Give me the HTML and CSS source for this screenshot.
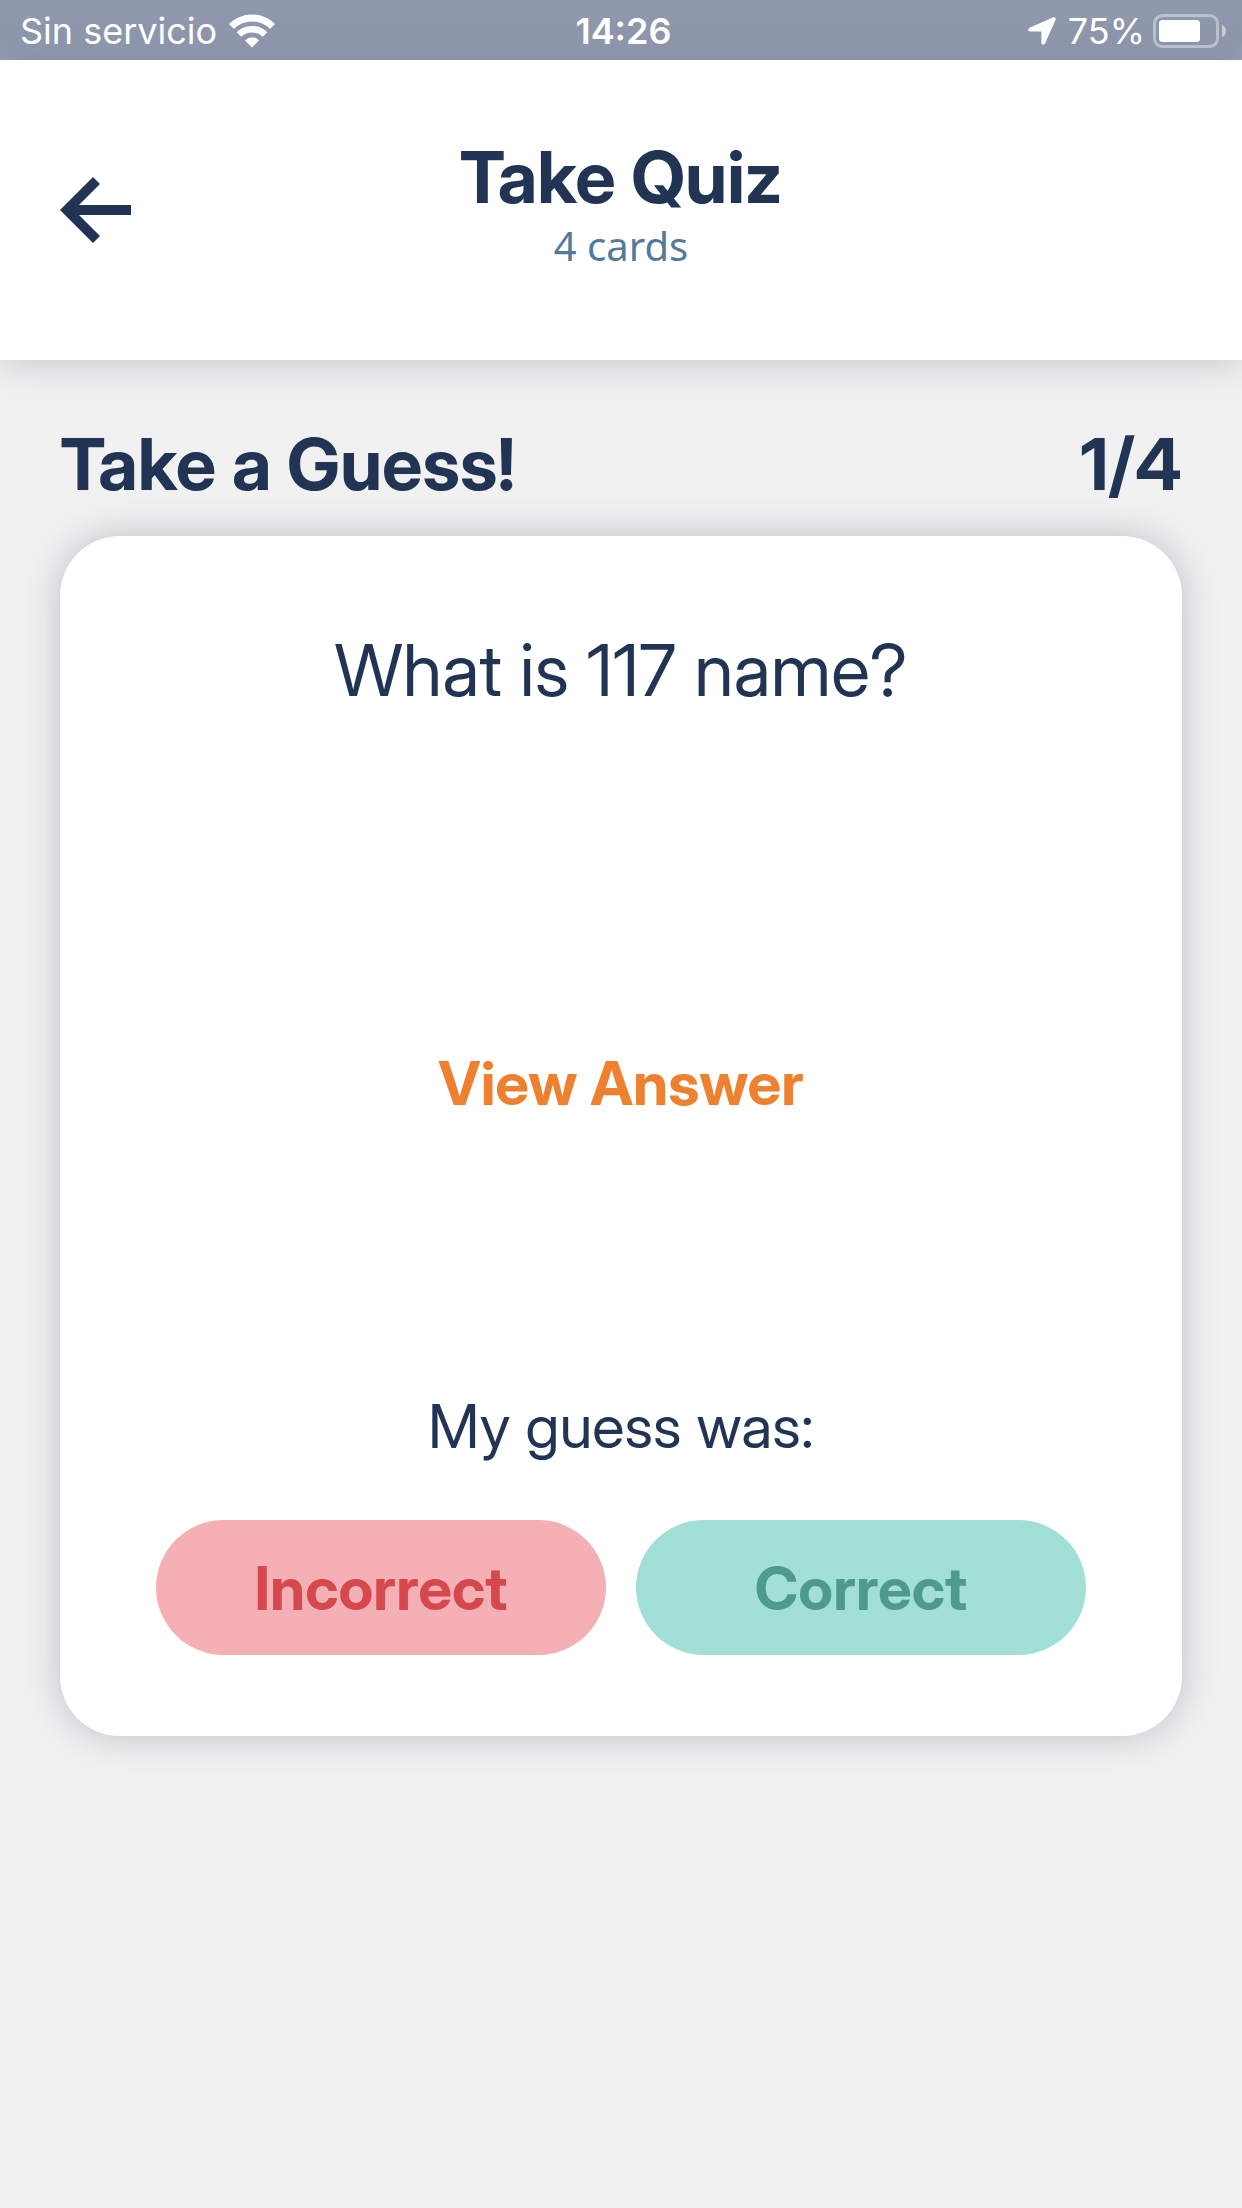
FILE: index.html
```html
<!DOCTYPE html>
<html lang="en">
<head>
<meta charset="utf-8">
<meta name="viewport" content="width=device-width, initial-scale=1">
<title>Take Quiz</title>
<link rel="stylesheet" href="styles.css">
</head>
<body>
<div class="status-bar">
  <div class="status-group">
    <span>Sin servicio</span>
    <svg class="wifi" width="46" height="34" viewBox="0 0 46 34" fill="none" aria-hidden="true">
      <path d="M2.5 12.5a29 29 0 0 1 41 0" stroke="#fff" stroke-width="7"/>
      <path d="M10 20.500a18.500 18.500 0 0 1 26 0" stroke="#fff" stroke-width="6.500"/>
      <path d="M23 33.500l-7-7q7-6.500 14 0z" fill="#fff"/>
    </svg>
  </div>
  <span class="status-time">14:26</span>
  <div class="status-group status-right">
    <svg class="location" width="28" height="28" viewBox="0 0 28 28" aria-hidden="true">
      <path d="M25.500.3L1.500 10.800C-.5 11.800-.2 14.400 2 14.400H13.400V25.500c0 2.500 2.800 2.800 3.700.8L27.700 2.500C28.200 1 27 -.3 25.500 .3z" fill="#fff"/>
    </svg>
    <span>75%</span>
    <svg class="battery" width="74" height="34" viewBox="0 0 74 34" fill="none" aria-hidden="true">
      <rect x="1.500" y="1.500" width="63" height="31" rx="8" stroke="#fff" stroke-opacity=".4" stroke-width="3"/>
      <rect x="6" y="6" width="41" height="22" rx="3.500" fill="#fff"/>
      <path d="M69 11c5.500 2 5.500 10 0 12z" fill="#fff" fill-opacity=".5"/>
    </svg>
  </div>
</div>

<header class="header">
  <button class="back" type="button" aria-label="Back">
    <svg width="72" height="66" viewBox="0 0 72 66" aria-hidden="true">
      <path d="M0 33L33 0l7 7-21 21h52v10H19l21 21-7 7z" fill="#223454"/>
    </svg>
  </button>
  <div class="heading">
    <h1 class="title">Take Quiz</h1>
    <p class="subtitle">4 cards</p>
  </div>
</header>

<main class="quiz">
  <div class="quiz-top">
    <h2 class="title">Take a Guess!</h2>
    <span class="title">1/4</span>
  </div>
  <section class="card">
    <p class="question">What is 117 name?</p>
    <button class="view-answer" type="button">View Answer</button>
    <div class="guess">
      <p class="guess-label">My guess was:</p>
      <div class="guess-actions">
        <button class="pill incorrect" type="button">Incorrect</button>
        <button class="pill correct" type="button">Correct</button>
      </div>
    </div>
  </section>
</main>
</body>
</html>
```
FILE: styles.css
```css
* {
  box-sizing: border-box;
}

body {
  margin: 0;
  min-height: 100vh;
  background: #f1f1f1;
  color: #223454;
  font-family: "Inter Display", Inter, "Liberation Sans", sans-serif;
}

h1, h2, p {
  margin: 0;
}

button {
  padding: 0;
  border: 0;
  background: none;
  font: inherit;
  cursor: pointer;
}

svg {
  display: block;
}

.status-bar {
  display: grid;
  grid-template-columns: 1fr auto 1fr;
  align-items: center;
  height: 60px;
  padding: 2px 15px 0 20px;
  background: linear-gradient(#9098ae, #9098ae 60%, #9aa2b3);
  color: #fff;
  font-family: Inter, "Liberation Sans", sans-serif;
  font-size: 36px;
}

.status-group {
  display: flex;
  align-items: center;
  gap: 12px;
}

.status-right {
  justify-content: flex-end;
  gap: 8px;
}

.location {
  margin-right: 4px;
}

.status-time {
  font-weight: 600;
}

.header {
  display: grid;
  grid-template-columns: 72px 1fr 72px;
  align-items: center;
  min-height: 300px;
  padding: 0 60px;
  background: #fff;
  box-shadow: 0 0 36px rgba(34, 52, 84, .26);
}

.heading {
  padding-bottom: 12px;
  text-align: center;
}

.title {
  font-size: 72px;
  font-weight: 700;
  line-height: 84px;
}

.subtitle {
  color: #527a9b;
  font-family: "Noto Sans", sans-serif;
  font-size: 40px;
  line-height: 54px;
}

.quiz {
  padding: 62px 60px;
}

.quiz-top {
  display: flex;
  justify-content: space-between;
  margin-bottom: 30px;
}

.card {
  display: flex;
  flex-direction: column;
  align-items: center;
  justify-content: space-between;
  min-height: 1200px;
  padding: 92px 60px 81px;
  border-radius: 60px;
  background: #fff;
  box-shadow: 0 0 36px rgba(34, 52, 84, .26);
}

.question {
  font-size: 72px;
  line-height: 84px;
}

.view-answer {
  margin-top: 64px;
  color: #ee8130;
  font-size: 60px;
  font-weight: 700;
  line-height: 72px;
}

.guess {
  width: 100%;
  text-align: center;
}

.guess-label {
  margin-bottom: 58px;
  font-size: 60px;
  line-height: 72px;
}

.guess-actions {
  display: flex;
  justify-content: center;
  gap: 30px;
}

.pill {
  flex: 0 1 450px;
  height: 135px;
  border-radius: 68px;
  font-size: 60px;
  font-weight: 700;
}

.incorrect {
  background: #f4b0b5;
  color: #d5484c;
}

.correct {
  background: #a2dfd7;
  color: #4e9a8e;
}
```
